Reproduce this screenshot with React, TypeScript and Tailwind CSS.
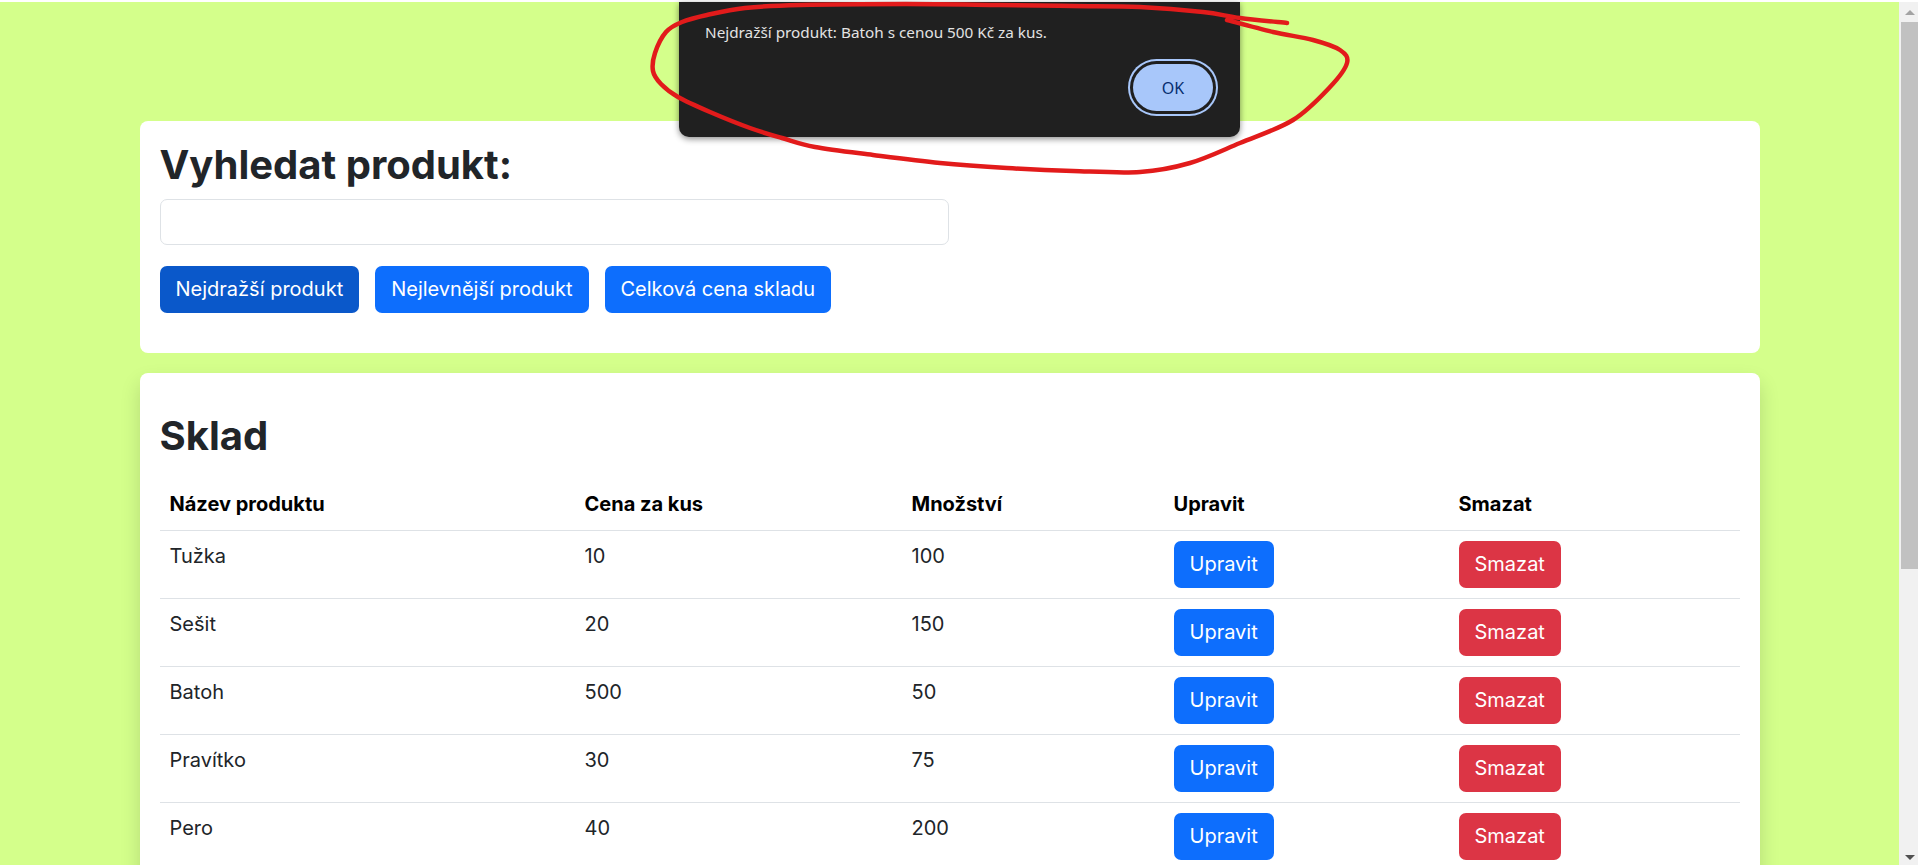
import React from 'react';

interface Product {
  name: string;
  price: number;
  qty: number;
}

const products: Product[] = [
  { name: 'Tužka', price: 10, qty: 100 },
  { name: 'Sešit', price: 20, qty: 150 },
  { name: 'Batoh', price: 500, qty: 50 },
  { name: 'Pravítko', price: 30, qty: 75 },
  { name: 'Pero', price: 40, qty: 200 },
];

// red marker loop drawn over the alert (page coords)
const loop: [number, number][] = [
  [1287, 23], [1240, 18], [1203, 12], [1140, 7], [1073, 6], [1000, 5], [906, 4], [800, 5],
  [745, 8], [707, 15], [682, 22], [666, 32], [655, 53], [653, 71], [661, 84], [678, 97],
  [710, 112], [750, 128], [782, 138], [815, 147], [873, 155], [940, 163], [1007, 168],
  [1073, 171], [1140, 172], [1190, 163], [1240, 143], [1293, 120], [1330, 87], [1347, 63],
  [1340, 50], [1313, 40], [1273, 32], [1227, 20],
];

const smoothPath = (p: [number, number][]) => {
  let d = `M${p[0][0]},${p[0][1]}`;
  for (let i = 0; i < p.length - 1; i++) {
    const p0 = p[i - 1] || p[i];
    const p1 = p[i];
    const p2 = p[i + 1];
    const p3 = p[i + 2] || p2;
    const c1x = p1[0] + (p2[0] - p0[0]) / 6;
    const c1y = p1[1] + (p2[1] - p0[1]) / 6;
    const c2x = p2[0] - (p3[0] - p1[0]) / 6;
    const c2y = p2[1] - (p3[1] - p1[1]) / 6;
    d += ` C${c1x},${c1y} ${c2x},${c2y} ${p2[0]},${p2[1]}`;
  }
  return d;
};

const btn = 'h-[47px] rounded-[7px] px-[16px] text-[20px] leading-[29px] text-white';

export default function App() {
  return (
    <div className="relative h-[865px] w-[1918px] overflow-hidden bg-white font-['Inter',sans-serif] text-[#212529]">
      <div className="flex h-full pt-[2px]">
        <main className="flex-1 bg-[#d4ff8b] pt-[119px]">
          <div className="mx-auto flex w-[1620px] flex-col gap-[20px]">
            <section className="rounded-[8px] bg-white px-[20px] pt-[20px] pb-[40px]">
              <h2 className="mb-[10px] text-[40px] leading-[48px] font-bold">Vyhledat produkt:</h2>
              <input
                type="text"
                className="mb-[21px] block h-[46px] w-[789px] rounded-[7px] border border-[#dee2e6] bg-white px-[15px] text-[20px] outline-none"
              />
              <div className="flex gap-[16px]">
                <button className={`${btn} bg-[#0a58ca]`}>Nejdražší produkt</button>
                <button className={`${btn} bg-[#0d6efd]`}>Nejlevnější produkt</button>
                <button className={`${btn} bg-[#0d6efd]`}>Celková cena skladu</button>
              </div>
            </section>

            <section className="h-[600px] rounded-[8px] bg-white px-[20px] pt-[39px] shadow-[0_10px_20px_rgba(0,0,0,0.15)]">
              <h1 className="mb-[20px] text-[40px] leading-[48px] font-bold">Sklad</h1>
              <table className="w-[1580px] table-fixed border-collapse text-left text-[20px] leading-[29px]">
                <colgroup>
                  <col className="w-[415px]" />
                  <col className="w-[327px]" />
                  <col className="w-[262px]" />
                  <col className="w-[285px]" />
                  <col className="w-[291px]" />
                </colgroup>
                <thead>
                  <tr className="border-b border-[#dee2e6] text-black">
                    <th className="px-[10px] pt-[10px] pb-[11px] align-top font-bold">Název produktu</th>
                    <th className="px-[10px] pt-[10px] pb-[11px] align-top font-bold">Cena za kus</th>
                    <th className="px-[10px] pt-[10px] pb-[11px] align-top font-bold">Množství</th>
                    <th className="px-[10px] pt-[10px] pb-[11px] align-top font-bold">Upravit</th>
                    <th className="px-[10px] pt-[10px] pb-[11px] align-top font-bold">Smazat</th>
                  </tr>
                </thead>
                <tbody>
                  {products.map((p) => (
                    <tr key={p.name} className="border-b border-[#dee2e6]">
                      <td className="px-[10px] pt-[11px] pb-[10px] align-top">{p.name}</td>
                      <td className="px-[10px] pt-[11px] pb-[10px] align-top">{p.price}</td>
                      <td className="px-[10px] pt-[11px] pb-[10px] align-top">{p.qty}</td>
                      <td className="px-[10px] pt-[10px] pb-[10px] align-top">
                        <button className={`${btn} bg-[#0d6efd]`}>Upravit</button>
                      </td>
                      <td className="px-[10px] pt-[10px] pb-[10px] align-top">
                        <button className={`${btn} bg-[#dc3545]`}>Smazat</button>
                      </td>
                    </tr>
                  ))}
                </tbody>
              </table>
            </section>
          </div>
        </main>

        {/* scrollbar */}
        <div className="flex w-[19px] flex-col bg-[#f1f1f1]">
          <div className="flex h-[20px] items-center justify-center pl-[2px]">
            <div className="h-0 w-0 border-x-[5px] border-b-[5px] border-x-transparent border-b-[#a3a3a3]" />
          </div>
          <div className="ml-[2px] h-[547px] bg-[#c1c1c1]" />
          <div className="flex-1" />
          <div className="flex h-[16px] items-center justify-center pl-[2px]">
            <div className="h-0 w-0 border-x-[5px] border-t-[5px] border-x-transparent border-t-[#505050]" />
          </div>
        </div>
      </div>

      {/* alert dialog */}
      <div className="absolute top-[2px] left-[679px] flex h-[135px] w-[561px] flex-col rounded-b-[10px] bg-[#202020] px-[26px] pt-[20px] shadow-[0_2px_6px_rgba(0,0,0,0.45)] font-['Noto_Sans',sans-serif]">
        <p className="text-[15.3px] leading-[20px] text-[#e3e3e3]">Nejdražší produkt: Batoh s cenou 500 Kč za kus.</p>
        <div className="mt-[22px] flex justify-end pr-px">
          <button className="h-[47px] w-[80px] rounded-full bg-[#a8c7fa] text-[16px] text-[#062e6f] shadow-[0_0_0_3px_#1f1f1f,0_0_0_5px_#a8c7fa]">
            OK
          </button>
        </div>
      </div>

      <svg className="pointer-events-none absolute top-0 left-0" width="1918" height="865" viewBox="0 0 1918 865">
        <path d={smoothPath(loop)} fill="none" stroke="#e21b1b" strokeWidth="4.5" strokeLinecap="round" strokeLinejoin="round" />
      </svg>
    </div>
  );
}
